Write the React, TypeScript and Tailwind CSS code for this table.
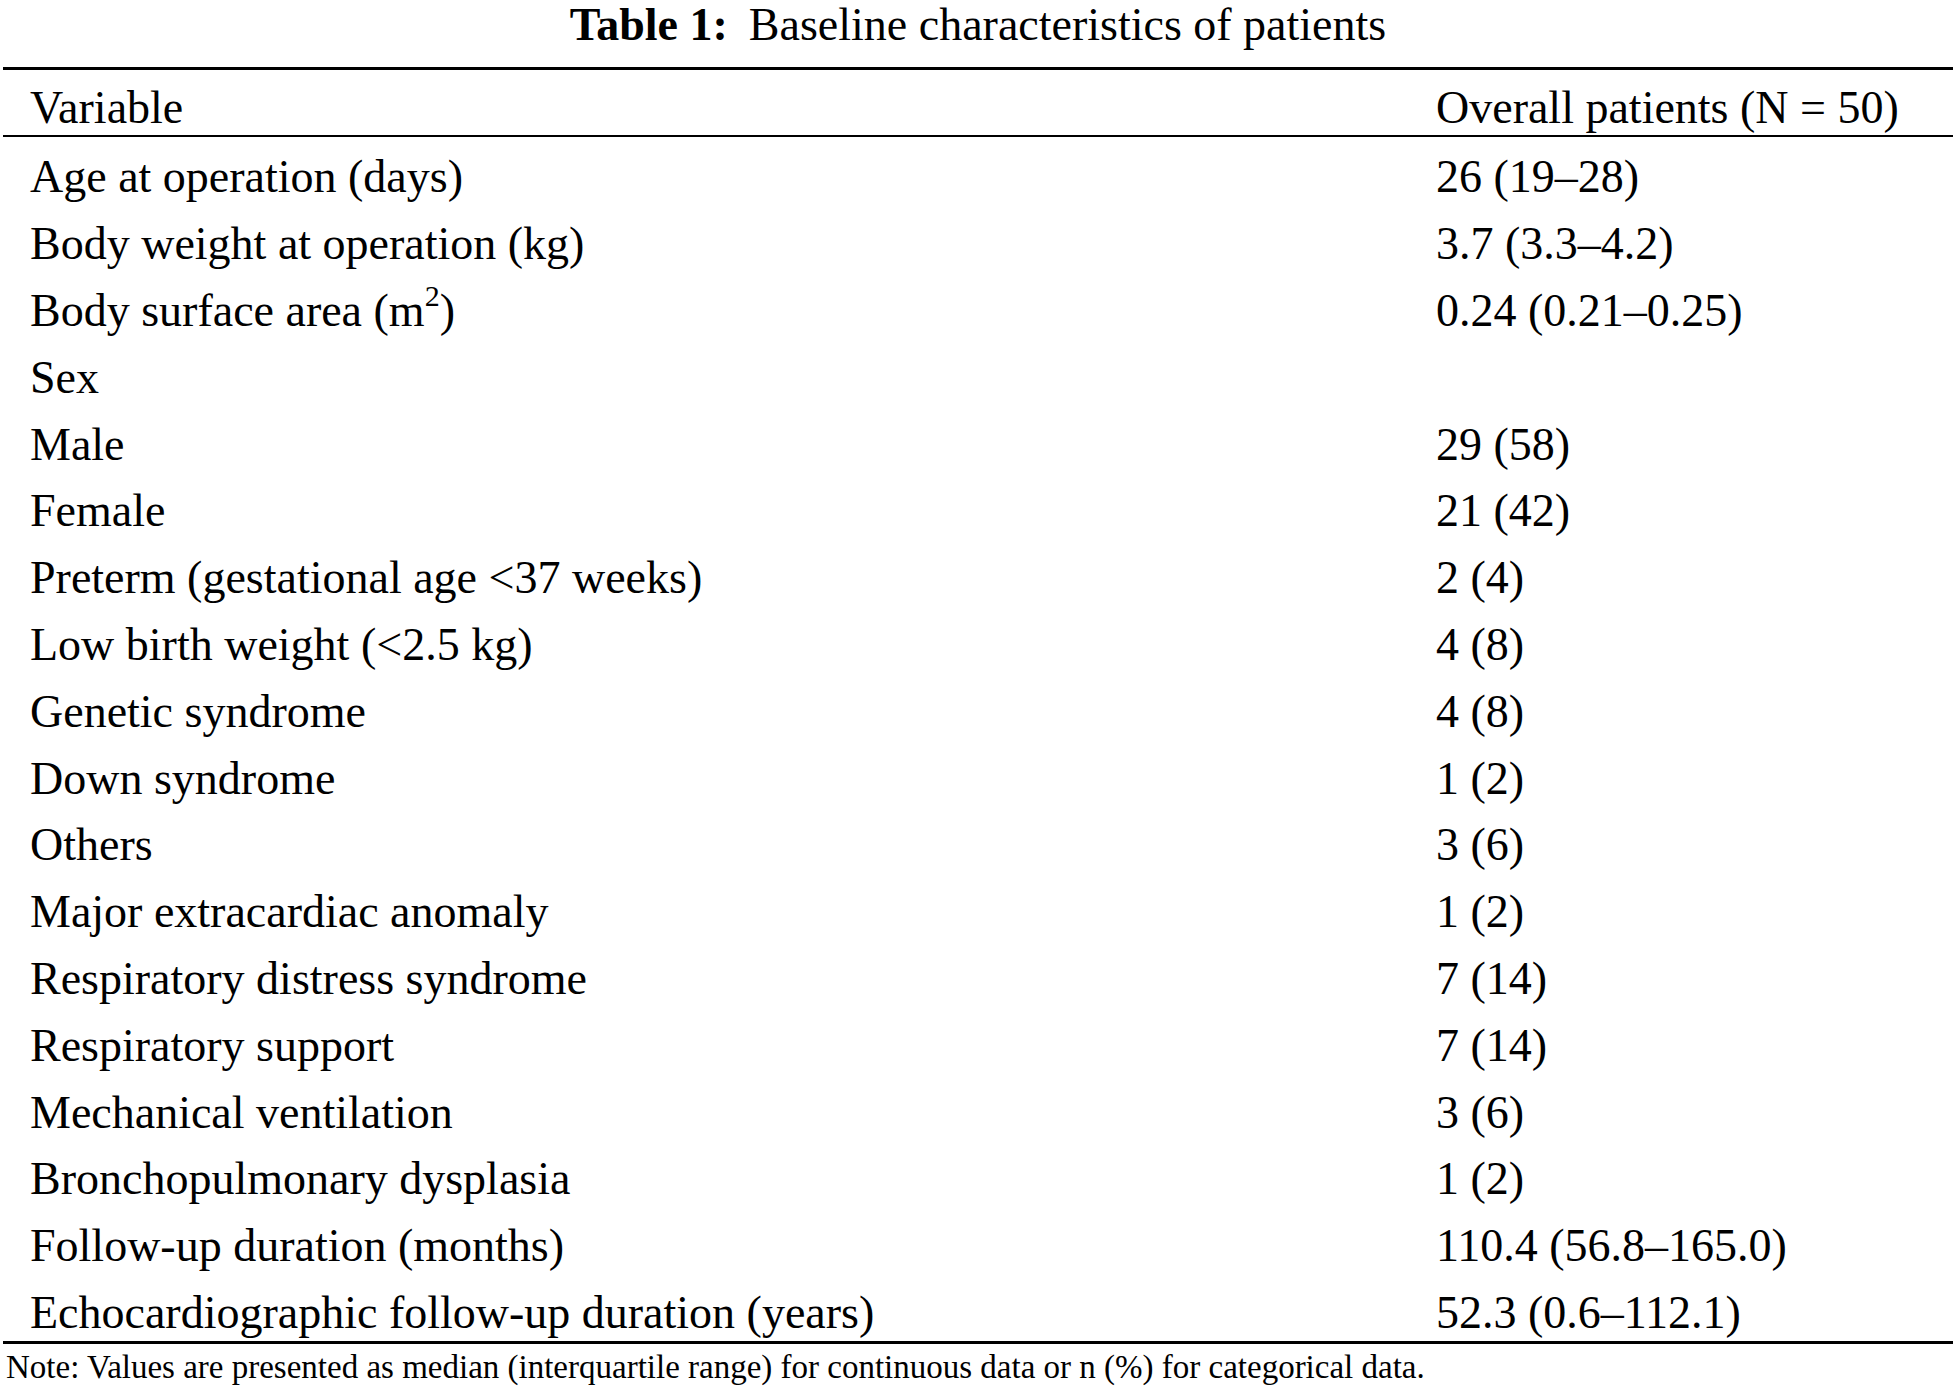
import React from 'react';

// rows of the baseline table: [variable, value]
const rows: [React.ReactNode, string][] = [
  ['Age at operation (days)', '26 (19–28)'],
  ['Body weight at operation (kg)', '3.7 (3.3–4.2)'],
  [<>Body surface area (m<sup className="text-[30px] -top-[0.65em]">2</sup>)</>, '0.24 (0.21–0.25)'],
  ['Sex', ''],
  ['Male', '29 (58)'],
  ['Female', '21 (42)'],
  ['Preterm (gestational age <37 weeks)', '2 (4)'],
  ['Low birth weight (<2.5 kg)', '4 (8)'],
  ['Genetic syndrome', '4 (8)'],
  ['Down syndrome', '1 (2)'],
  ['Others', '3 (6)'],
  ['Major extracardiac anomaly', '1 (2)'],
  ['Respiratory distress syndrome', '7 (14)'],
  ['Respiratory support', '7 (14)'],
  ['Mechanical ventilation', '3 (6)'],
  ['Bronchopulmonary dysplasia', '1 (2)'],
  ['Follow-up duration (months)', '110.4 (56.8–165.0)'],
  ['Echocardiographic follow-up duration (years)', '52.3 (0.6–112.1)'],
];

export default function App() {
  return (
    <div className="w-[1956px] h-[1389px] bg-white text-black font-['Liberation_Serif',serif] overflow-hidden">
      {/* caption */}
      <div className="h-[44px] pt-[6px] leading-[38px] text-[46px] text-center whitespace-nowrap">
        <span className="font-bold">Table 1:</span>
        <span className="ml-[21px]">Baseline characteristics of patients</span>
      </div>

      <div className="mt-[23px] mx-[3px] h-[3px] bg-black" />

      {/* header */}
      <div className="h-[65px] pt-[10px] grid grid-cols-[1406px_1fr] pl-[30px] items-center text-[46px] leading-[50px] whitespace-nowrap">
        <div>Variable</div>
        <div>Overall patients (N = 50)</div>
      </div>

      <div className="mx-[3px] h-[2px] bg-black" />

      {/* body */}
      <div className="pt-[2px]">
        {rows.map(([label, value], i) => (
          <div
            key={i}
            className="h-[66.8px] pt-[10px] grid grid-cols-[1406px_1fr] pl-[30px] items-center text-[46px] leading-[50px] whitespace-nowrap"
          >
            <div>{label}</div>
            <div>{value}</div>
          </div>
        ))}
      </div>

      <div className="mx-[3px] h-[3px] bg-black" />

      <div className="pt-[5px] pl-[6px] text-[33px] leading-[36px] whitespace-nowrap">
        Note: Values are presented as median (interquartile range) for continuous data or n (%) for categorical data.
      </div>
    </div>
  );
}
